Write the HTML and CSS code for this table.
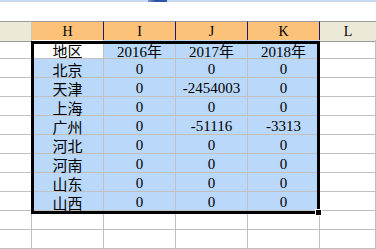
FILE: index.html
```html
<!DOCTYPE html>
<html lang="zh">
<head>
<meta charset="utf-8">
<title>Sheet</title>
<link rel="stylesheet" href="styles.css">
</head>
<body>
<div class="topbar"><div class="topbar-thumb"></div></div>
<div class="spacer"></div>
<div class="sheet">
  <div class="hd hd-plain"></div>
  <div class="hd hd-sel">H</div>
  <div class="hd hd-sel">I</div>
  <div class="hd hd-sel">J</div>
  <div class="hd hd-sel hd-last">K</div>
  <div class="hd hd-plain hd-l">L</div>

  <div class="c"></div><div class="c active cjk">地区</div><div class="c s">2016<span class="cjk">年</span></div><div class="c s">2017<span class="cjk">年</span></div><div class="c s">2018<span class="cjk">年</span></div><div class="c"></div>
  <div class="c"></div><div class="c s cjk">北京</div><div class="c s">0</div><div class="c s">0</div><div class="c s">0</div><div class="c"></div>
  <div class="c"></div><div class="c s cjk">天津</div><div class="c s">0</div><div class="c s">-2454003</div><div class="c s">0</div><div class="c"></div>
  <div class="c"></div><div class="c s cjk">上海</div><div class="c s">0</div><div class="c s">0</div><div class="c s">0</div><div class="c"></div>
  <div class="c"></div><div class="c s cjk">广州</div><div class="c s">0</div><div class="c s">-51116</div><div class="c s">-3313</div><div class="c"></div>
  <div class="c"></div><div class="c s cjk">河北</div><div class="c s">0</div><div class="c s">0</div><div class="c s">0</div><div class="c"></div>
  <div class="c"></div><div class="c s cjk">河南</div><div class="c s">0</div><div class="c s">0</div><div class="c s">0</div><div class="c"></div>
  <div class="c"></div><div class="c s cjk">山东</div><div class="c s">0</div><div class="c s">0</div><div class="c s">0</div><div class="c"></div>
  <div class="c"></div><div class="c s cjk">山西</div><div class="c s">0</div><div class="c s">0</div><div class="c s">0</div><div class="c"></div>
  <div class="c"></div><div class="c"></div><div class="c"></div><div class="c"></div><div class="c"></div><div class="c"></div>
  <div class="c"></div><div class="c"></div><div class="c"></div><div class="c"></div><div class="c"></div><div class="c"></div>

  <div class="selection"></div>
  <div class="fill-handle"></div>
</div>
</body>
</html>
```

FILE: styles.css
```css
html, body {
  margin: 0;
  padding: 0;
  background: #ffffff;
  overflow: hidden;
  width: 376px;
  height: 249px;
}

.topbar {
  height: 2px;
  background: #c9dbf2;
  display: flex;
}

.topbar-thumb {
  margin-left: 148px;
  width: 19px;
  background: linear-gradient(90deg, #7d9ad0, #2e56a6 40%, #2e56a6);
}

.spacer {
  height: 19px;
}

.sheet {
  position: relative;
  display: grid;
  grid-template-columns: 32px 72px 72px 72px 72px 56px;
  grid-auto-rows: 19px;
  font-family: "Liberation Serif", "Noto Sans CJK SC", serif;
  font-size: 15px;
  color: #000;
}

.hd {
  height: 21px;
  box-sizing: border-box;
  border-top: 1px solid #9a9a9a;
  border-bottom: 1px solid #9a9a9a;
  text-align: center;
  font-family: "Liberation Serif", serif;
  font-size: 14px;
  line-height: 18px;
  padding-top: 1px;
}

.hd-plain {
  background: #ece9d8;
  border-right: 1px solid #cbc7b8;
}

.hd-sel {
  background: #fdc27a;
  border-right: 1px solid #1c1c6e;
}

.hd-l {
  border-right: none;
}

.c {
  box-sizing: border-box;
  border-right: 1px solid #c0c0c0;
  border-bottom: 1px solid #c0c0c0;
  text-align: center;
  line-height: 15px;
  padding-top: 3px;
  white-space: nowrap;
}

.s {
  background: #b9d8fa;
}

.active {
  background: #ffffff;
}

.cjk {
  font-family: "Noto Sans CJK SC", sans-serif;
  font-size: 15px;
}

.selection {
  position: absolute;
  left: 31px;
  top: 20px;
  width: 289px;
  height: 173px;
  box-sizing: border-box;
  border: 3px solid #000;
  pointer-events: none;
}

.fill-handle {
  position: absolute;
  left: 315px;
  top: 188px;
  width: 7px;
  height: 7px;
  box-sizing: border-box;
  background: #000;
  border: 1px solid #ffffff;
}
```
